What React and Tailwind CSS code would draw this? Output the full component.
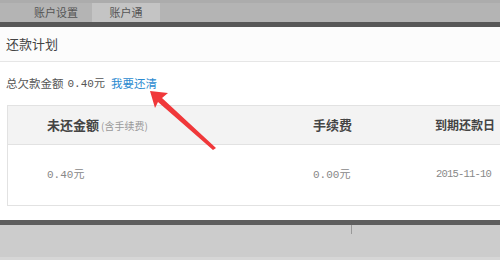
import React from "react";

const cjk = { fontFamily: '"Noto Sans CJK SC", "Liberation Sans", sans-serif' };
const num = { fontFamily: '"Liberation Mono", "Noto Sans CJK SC", monospace' };

// ─── Tab bar ────────────────────────────────────────────────────────────────
function Tabs() {
  return (
    <div className="h-[22px] bg-[#b4b4b4] flex items-end pl-[20px] border-t-[3px] border-[#acacac]">
      <div className="w-[72px] h-[19px] flex items-center justify-center text-[11px] text-[#555]">账户设置</div>
      <div className="w-[68px] h-[19px] bg-[#c4c4c4] flex items-center justify-center text-[11px] text-[#555]">账户通</div>
    </div>
  );
}

// ─── Red annotation arrow ──────────────────────────────────────────────────
function Arrow() {
  return (
    <svg className="absolute left-0 top-0 pointer-events-none" width="500" height="260">
      <polygon
        points="150,91 168,93 162,98 216,148 213,150 158,102 155,108"
        fill="#f0383a"
      />
    </svg>
  );
}

export default function App() {
  return (
    <div className="relative w-[500px] h-[260px] overflow-hidden bg-white" style={cjk}>
      <Tabs />
      <div className="h-[5px] bg-[#585858]" />

      {/* Heading */}
      <div className="h-[35px] flex items-center pl-[6px] text-[13px] text-[#444] border-b border-[#e6e6e6] bg-[#fcfcfc]">
        还款计划
      </div>

      {/* Summary */}
      <div className="h-[43px] flex items-center pl-[6px] text-[12px] text-[#555] pt-[1px] whitespace-nowrap">
        <span className="text-[11.5px]">总欠款金额</span>
        <span className="ml-[4px] text-[11px]" style={num}>0.40元</span>
        <span className="ml-[6px] text-[11.5px] text-[#2b8ad0]">我要还清</span>
      </div>

      {/* Table */}
      <div className="ml-[7px] border border-r-0 border-[#e2e2e2] whitespace-nowrap">
        <div className="h-[39px] bg-[#f3f3f3] flex items-center border-b border-[#e2e2e2] text-[13px] text-[#444]">
          <div className="w-[265px] shrink-0 pl-[39px] flex items-baseline">
            <span className="font-bold">未还金额</span>
            <span className="ml-[2px] text-[10px] text-[#999] font-normal">(含手续费)</span>
          </div>
          <div className="w-[123px] shrink-0 pl-[40px] font-bold">手续费</div>
          <div className="shrink-0 pl-[39px] font-bold text-[12px]">到期还款日</div>
        </div>
        <div className="h-[60px] flex items-center text-[11px] text-[#888]" style={num}>
          <div className="w-[265px] shrink-0 pl-[39px]">0.40元</div>
          <div className="w-[123px] shrink-0 pl-[40px]">0.00元</div>
          <div className="shrink-0 pl-[40px] text-[10.5px] tracking-[-0.8px]">2015-11-10</div>
        </div>
      </div>

      {/* Bottom overlay */}
      <div className="mt-[14px] h-[5px] bg-[#5e5e5e]" />
      <div className="h-[32px] bg-[#cccccc] relative">
        <div className="absolute left-[351px] top-0 w-px h-[9px] bg-[#999]" />
      </div>
      <div className="h-[5px] bg-[#d6d6d6]" />

      <Arrow />
    </div>
  );
}
